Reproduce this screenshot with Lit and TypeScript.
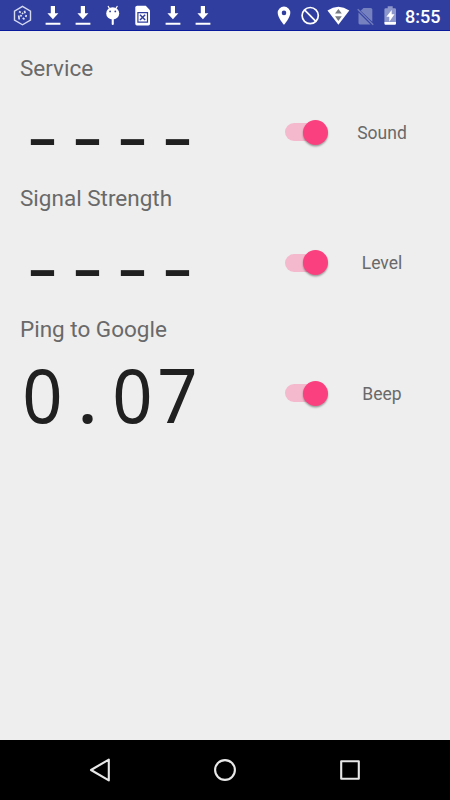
import { LitElement, html, css } from "lit";
import { customElement, property } from "lit/decorators.js";

@customElement("status-bar")
export class StatusBar extends LitElement {
  static styles = css`
    :host {
      display: flex;
      justify-content: space-between;
      box-sizing: border-box;
      height: 31px;
      padding: 0 10px 0 7px;
      background: #303f9f;
      border-bottom: 1px solid #0a1a9c;
      color: #fff;
    }
    .group { display: flex; }
    .ico { display: block; width: 30px; height: 30px; flex: none; }
    .time {
      font: 500 18px/30px Roboto, sans-serif;
      width: 35px;
      white-space: nowrap;
      padding-top: 1.5px;
    }
    .sys { display: block; width: 135px; height: 30px; flex: none; }
  `;

  private down() {
    return html`<svg class="ico" viewBox="0 0 30 30">
      <path fill="#fff" d="M13.8 6h4.2v7.2h3.4L15.9 19.2 10.4 13.2h3.4zM8.6 22.7h14.8v2H8.6z" />
    </svg>`;
  }

  render() {
    return html`
      <div class="group">
        <svg class="ico" viewBox="0 0 30 30">
          <path fill="none" stroke="#d5d9ee" stroke-width="1.4" d="M15.5 6.4l8 4.7v9.1l-8 4.6-8-4.6v-9.1z" />
          <path fill="none" stroke="#dfe2f2" stroke-width="1.7" d="M12 11.5l1.8 1M17.5 10.8l.6 2.4M11.7 15.5l.5 4M14.5 15l-1 1.5M19.3 15l-.5 2M15.7 18l1.8 1.2M15 12.8l1.2 1" />
        </svg>
        ${this.down()}${this.down()}
        <svg class="ico" viewBox="0 0 30 30">
          <path stroke="#fff" stroke-width="1.1" stroke-linecap="round" d="M11.2 6.4l1.2 2M20.2 6.4l-1.2 2" />
          <ellipse cx="15.7" cy="13.4" rx="6.5" ry="6.2" fill="#fff" />
          <path fill="#fff" d="M14.7 19h2.1v5q0 1-1.05 1t-1.05-1z" />
          <circle cx="13.1" cy="11.4" r=".9" fill="#303f9f" /><circle cx="18.3" cy="11.4" r=".9" fill="#303f9f" />
        </svg>
        <svg class="ico" viewBox="0 0 30 30">
          <path fill="#fff" d="M10.2 5.7h8.6l4.2 4.5v13.6q0 1.7-1.6 1.7H9.9q-1.6 0-1.6-1.7V7.4q0-1.7 1.9-1.7z" />
          <path fill="none" stroke="#303f9f" stroke-width="1.2" d="M10.9 12.7h9.6v9.4h-9.6z" />
          <path stroke="#303f9f" stroke-width="1.5" d="M13 14.8l5.2 5.2M18.2 14.8L13 20" />
        </svg>
        ${this.down()}${this.down()}
      </div>
      <div class="group">
        <svg class="sys" viewBox="270.5 0 135 30">
          <path fill="#fff" fill-rule="evenodd" d="M284.5 6.5a6.3 6.3 0 0 0-6.3 6.4c0 4.7 6.3 11.9 6.3 11.9s6.3-7.2 6.3-11.9a6.3 6.3 0 0 0-6.3-6.4zm0 4.1a2.3 2.3 0 1 1 0 4.6 2.3 2.3 0 0 1 0-4.6z" />
          <circle cx="310.7" cy="15.6" r="8.1" fill="none" stroke="#fff" stroke-width="1.7" />
          <path stroke="#fff" stroke-width="1.7" d="M305 9.9l11.4 11.4" />
          <path fill="#fff" d="M328 10.5q10.9-7.4 21.8 0L338.9 24.8z" />
          <path fill="#777c84" d="M335.5 13.6l3.4-4.6 3.4 4.6zM335.5 16.3h6.8l-3.4 4.6z" />
          <path fill="#7681c0" d="M364 8h7.2q1.6 0 1.6 1.6v12.1L361.2 10.8z" />
          <path fill="#7681c0" d="M359 12.4L371 24.4H360.3q-1.3 0-1.3-1.3z" />
          <path stroke="#6f79bb" stroke-width="1.5" d="M358.2 9.3l15.5 15.4" />
          <path fill="#8e97cb" d="M388.2 6.3h5v1.9h2q1.3 0 1.3 1.3v12.8h-11.6V9.5q0-1.3 1.3-1.3h2z" />
          <path fill="#fff" d="M384.9 22h11.6v1.5q0 1.2-1.2 1.2h-9.2q-1.2 0-1.2-1.2zM392.2 10v4.3h2.8l-5.2 7.4v-5h-2.9z" />
        </svg>
        <span class="time">8:55</span>
      </div>
    `;
  }
}

@customElement("metric-row")
export class MetricRow extends LitElement {
  @property() label = "";
  @property() value = "";
  @property() option = "";

  static styles = css`
    :host { display: block; height: 130.5px; font-family: Roboto, sans-serif; color: #696969; }
    .label { font-size: 22.5px; line-height: 26px; height: 26px; }
    .line { display: flex; height: 88px; margin-top: 7.5px; align-items: center; }
    .value {
      display: flex;
      width: 265px;
      font: 75px/88px "Noto Sans", sans-serif;
      color: #202020;
    }
    .cell { width: 45px; display: flex; justify-content: center; transform: translateY(0.5px) scaleX(0.94); }
    .dash { transform: translateY(0.5px) scaleX(1.28); }
    .dot { transform: translateY(0.5px) scaleX(1.1); }
    .switch { position: relative; width: 43px; height: 26px; flex: none; }
    .track {
      position: absolute;
      left: 0;
      top: 4px;
      width: 36px;
      height: 18px;
      border-radius: 9px;
      background: #f4b9cd;
    }
    .thumb {
      position: absolute;
      right: 0;
      top: 0.5px;
      width: 25px;
      height: 25px;
      border-radius: 50%;
      background: #fb4080;
      box-shadow: 0 1.5px 2px rgba(0, 0, 0, 0.35);
    }
    .option { width: 108px; text-align: center; font-size: 17.5px; line-height: 22px; padding-top: 1.5px; }
  `;

  private cell(c: string) {
    const kind = c === "-" ? "dash" : c === "." ? "dot" : "";
    return html`<span class="cell ${kind}">${c}</span>`;
  }

  render() {
    return html`
      <div class="label">${this.label}</div>
      <div class="line">
        <div class="value">${[...this.value].map((c) => this.cell(c))}</div>
        <div class="switch"><div class="track"></div><div class="thumb"></div></div>
        <div class="option">${this.option}</div>
      </div>
    `;
  }
}

@customElement("nav-bar")
export class NavBar extends LitElement {
  static styles = css`
    :host { display: flex; height: 60px; background: #000; justify-content: center; align-items: center; gap: 95px; }
    .key { display: block; width: 30px; height: 30px; fill: none; stroke: #e8e8e8; stroke-width: 2.1; stroke-linejoin: round; }
  `;

  render() {
    return html`
      <svg class="key" viewBox="0 0 30 30"><path d="M6 15L23.8 4.6v20.8z" /></svg>
      <svg class="key" viewBox="0 0 30 30"><circle cx="15" cy="15" r="9.9" /></svg>
      <svg class="key" viewBox="0 0 30 30"><path d="M6.2 6.2h17.6v17.6H6.2z" /></svg>
    `;
  }
}

@customElement("app-root")
export class AppRoot extends LitElement {
  static styles = css`
    :host { display: flex; flex-direction: column; width: 450px; height: 800px; overflow: hidden; background: #eee; }
    .content { flex: 1; padding: 23.5px 0 0 20px; }
  `;

  render() {
    return html`
      <status-bar></status-bar>
      <div class="content">
        <metric-row label="Service" value="----" option="Sound"></metric-row>
        <metric-row label="Signal Strength" value="----" option="Level"></metric-row>
        <metric-row label="Ping to Google" value="0.07" option="Beep"></metric-row>
      </div>
      <nav-bar></nav-bar>
    `;
  }
}
